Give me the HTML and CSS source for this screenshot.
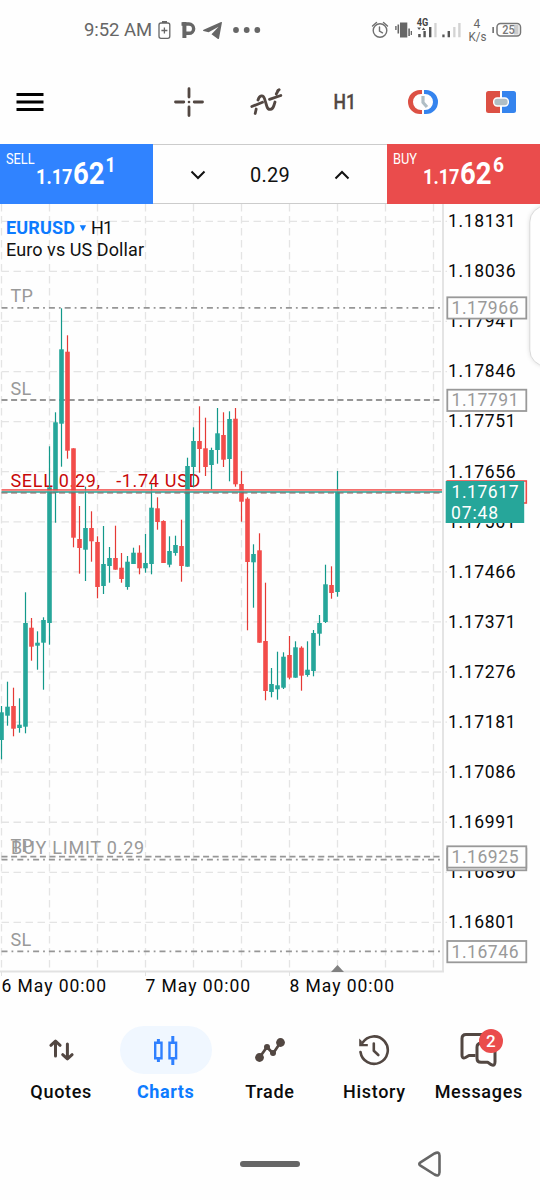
FILE: index.html
```html
<!DOCTYPE html>
<html lang="en">
<head>
<meta charset="utf-8">
<title>EURUSD H1</title>
<link rel="stylesheet" href="styles.css">
</head>
<body>
<div class="screen">
  <header class="status">
    <div class="status-left">
      <span class="clock">9:52 AM</span>
      <svg class="status-icons-left" viewBox="156 18 108 24" width="108" height="24">
        <g fill="none" stroke="#666" stroke-width="1.3"><rect x="159" y="23" width="10.8" height="15.3" rx="2"/><path d="M164.4 27.5v6M161.4 30.5h6"/></g>
        <path fill="#666" d="M162 21h5v2h-5z"/>
        <path fill="none" stroke="#666" stroke-width="4" d="M184.4 22v16"/>
        <path fill="none" stroke="#666" stroke-width="3.4" d="M181.5 24h3M185 24h4a4 4 0 0 1 0 9.3h-4"/>
        <path fill="#666" d="M222 22.200L219 38.400Q218.600 39.300 217.600 38.700L211.500 34.200L218.600 26.700L208.600 32.300L203.400 31Q202.400 30.300 203.600 29.700L220.500 22.200Q221.600 21.800 222 22.200Z"/>
        <g fill="#666"><circle cx="236" cy="30" r="2.9"/><circle cx="246.700" cy="30" r="2.900"/><circle cx="257.300" cy="30" r="2.900"/></g>
      </svg>
    </div>
    <svg class="status-right" viewBox="370 16 154 28" width="154" height="28">
      <g fill="none" stroke="#707070" stroke-width="1.400" stroke-linecap="round">
        <circle cx="380" cy="30.500" r="6.800"/><path d="M379.500 27v4l3 1.800M372.500 26l4-3.600M387.500 26l-4-3.600"/>
      </g>
      <path fill="#666" d="M400 22.500h7.300v15H400zM397.500 24.500h1.600v9h-1.600zM395.200 26h1.400v4h-1.400zM408.300 28.500h1.600v7.500h-1.600zM410.700 31h1.300v4h-1.300z"/>
      <text class="net" x="416.800" y="26.200" textLength="11.500" lengthAdjust="spacingAndGlyphs">4G</text>
      <path fill="#555" d="M417.200 27.500h3.800l-1.900 2.400zM421.700 29.900h3.700l-1.900-2.400zM418.200 34h2.500v3.300h-2.500zM423.400 31h2.400v6.300h-2.400zM429 27h2.400v10.300H429zM442.300 34.500h2.300v2.800h-2.300zM447.600 31h2.400v6.300h-2.400z"/>
      <path fill="#d3d3d3" d="M434.300 23h2.300v14.300h-2.300zM453.200 27h2.300v10.300h-2.300zM458.200 23h2.400v14.300h-2.400z"/>
      <text class="rate" x="476.800" y="28.200" text-anchor="middle">4</text>
      <text class="rate" x="468.500" y="40.800" textLength="18" lengthAdjust="spacingAndGlyphs">K/s</text>
      <rect x="492.300" y="27" width="1.700" height="6" fill="#777"/>
      <rect x="497" y="23.500" width="23.500" height="12.500" rx="3.500" fill="none" stroke="#777" stroke-width="1.500"/>
      <rect x="514" y="25" width="4.500" height="9.500" fill="#ccc"/>
      <text class="battery" x="502.300" y="34.200" textLength="12.500" lengthAdjust="spacingAndGlyphs">25</text>
    </svg>
  </header>

  <div class="toolbar">
    <svg class="menu" viewBox="0 0 28 20" width="28" height="20"><path d="M.5 2.500h27M.5 10h27M.5 17.500h27" stroke="#000" stroke-width="3"/></svg>
    <div class="tools">
      <svg viewBox="174 87 30 30" width="30" height="30"><path d="M189 88.700v8.300M189 107v8.500M175.500 102h8.300M194.200 102h8.300" stroke="#524742" stroke-width="2.800" stroke-linecap="round"/><circle cx="189" cy="102" r="1.300" fill="#524742"/></svg>
      <svg viewBox="249 86 36 32" width="36" height="32"><g fill="none" stroke="#524742" stroke-width="2.800" stroke-linecap="round" stroke-linejoin="round"><path d="M255.200 113.500l1-4.500M258 100c1.500-5 5.300-5.500 6.500-1.300l2.400 7.800c1.300 4 5.500 4 7-1l1.100-3.500M278 90.500l1.200-.8"/><path d="M251.800 106.500l10.700-4.200M269.500 99.300l11.300-3.800M277.900 91l-1.600 3"/></g></svg>
      <svg viewBox="0 0 26 26" width="26" height="26"><text class="h1" x="1.500" y="20.300" textLength="22.500" lengthAdjust="spacingAndGlyphs">H1</text></svg>
      <svg viewBox="407 88 32 28" width="32" height="28">
        <path fill="#dc5044" d="M422 90h-2a12 12 0 0 0 0 24h2v-4h-1a8 8 0 0 1 0-16h1z"/>
        <path fill="#3584ee" d="M424 90h2a12 12 0 0 1 0 24h-2v-4h1a8 8 0 0 0 0-16h-1z"/>
        <path fill="none" stroke="#b0bec5" stroke-width="3.200" d="M423 96v6.500l4 4.500"/>
      </svg>
      <svg viewBox="485 90 32 24" width="32" height="24">
        <path fill="#dc5044" d="M488.500 91H500v22h-11.500a2.500 2.500 0 0 1-2.500-2.500v-17a2.500 2.500 0 0 1 2.500-2.500z"/>
        <path fill="#3584ee" d="M502 91h11.500a2.500 2.500 0 0 1 2.500 2.500v17a2.500 2.500 0 0 1-2.500 2.500H502z"/>
        <rect x="493.700" y="98" width="14.600" height="8" rx="3.500" fill="#b0bec5" stroke="#fff" stroke-width="1.400"/>
      </svg>
    </div>
  </div>

  <div class="trade">
    <svg class="sell" viewBox="0 144 153 60" width="153" height="60">
      <text class="side" x="6" y="164" textLength="28.500" lengthAdjust="spacingAndGlyphs">SELL</text>
      <text class="quote" x="36" y="184.300" textLength="36.500" lengthAdjust="spacingAndGlyphs">1.17</text>
      <text class="pips" x="73" y="184.300" textLength="31.500" lengthAdjust="spacingAndGlyphs">62</text>
      <text class="quote" x="105.500" y="172" textLength="10" lengthAdjust="spacingAndGlyphs">1</text>
    </svg>
    <div class="volume">
      <svg viewBox="0 0 16 10" width="16" height="10"><path d="M1.500 1.500L8 8l6.500-6.500"/></svg>
      <span>0.29</span>
      <svg viewBox="0 0 16 10" width="16" height="10"><path d="M1.500 8.500L8 2l6.500 6.500"/></svg>
    </div>
    <svg class="buy" viewBox="387 144 153 60" width="153" height="60">
      <text class="side" x="393" y="164" textLength="24" lengthAdjust="spacingAndGlyphs">BUY</text>
      <text class="quote" x="423" y="184.300" textLength="36.500" lengthAdjust="spacingAndGlyphs">1.17</text>
      <text class="pips" x="460" y="184.300" textLength="31.500" lengthAdjust="spacingAndGlyphs">62</text>
      <text class="quote" x="493" y="172" textLength="11" lengthAdjust="spacingAndGlyphs">6</text>
    </svg>
  </div>

  <svg class="chart" viewBox="0 204 540 806" width="540" height="806">
    <g id="grid" class="grid"></g>
    <path d="M443 204v767.800M0 971.500h444" fill="none" stroke="#e2e2e2" stroke-width="1.800"/>
    <path d="M145.500 972v4M289.500 972v4M1.500 972v4" stroke="#e2e2e2"/>
    <g class="order">
      <text x="10.500" y="302.300">TP</text>
      <text x="10.500" y="394.900">SL</text>
      <text x="11" y="854.300" textLength="133.500">BUY LIMIT 0.29</text>
      <text x="10.500" y="851.600">TP</text>
      <text x="10.500" y="946">SL</text>
      <path class="dashdot" d="M1.500 307.800H442M1.500 859.700H442M1.500 951.300H442"/>
      <path class="dash" d="M1.500 400H442M1.500 856.700H442"/>
    </g>
    <text class="position" x="10.500" y="486.700" textLength="189.800" xml:space="preserve">SELL 0.29,   -1.74 USD</text>
    <g id="candles"></g>
    <path d="M1.500 491H442" stroke="#fbb9b5" stroke-width="1.600"/>
    <path d="M1.500 489.900H442" stroke="#ef3f3c" stroke-width="1.200"/>
    <path d="M1.500 492H442" stroke="#26a69a" stroke-width="1.500"/>
    <path d="M1.500 493H442" stroke="#8e5a58" stroke-width="1" stroke-dasharray="6 3.600"/>
    <path d="M331 972l6.500-7 6.500 7z" fill="#808080"/>

    <text class="symbol" x="6" y="234" textLength="69">EURUSD</text>
    <path d="M79.700 225.300h6.400l-3.200 6z" fill="#0d7bff"/>
    <text class="caption" x="91" y="234" textLength="22">H1</text>
    <text class="caption" x="6" y="255.500" textLength="138">Euro vs US Dollar</text>

    <g id="scale" class="scale"></g>
    <g class="tag">
      <rect x="447.300" y="297.300" width="79" height="21.300"/><text x="451.500" y="313.800" textLength="67">1.17966</text>
      <rect x="447.300" y="389.700" width="79" height="21.300"/><text x="451.500" y="406.100" textLength="67">1.17791</text>
      <rect x="447.300" y="848.700" width="79" height="21.600"/><rect x="447.300" y="846.300" width="79" height="21.300"/><text x="451.500" y="863" textLength="67">1.16925</text>
      <rect x="447.300" y="941" width="79" height="21.300"/><text x="451.500" y="957.600" textLength="67">1.16746</text>
    </g>
    <rect x="447.300" y="481" width="79" height="22" fill="#fff" stroke="#f04a48" stroke-width="1.600"/>
    <path fill="#26a69a" d="M445.700 481h78.500v42h-78.500z"/>
    <g class="live"><text x="451.500" y="497.800" textLength="67">1.17617</text><text x="451" y="518.500" textLength="47">07:48</text></g>
    <rect class="handle" x="529.800" y="206" width="40" height="160" rx="16"/>
    <g class="scale"><text x="1.500" y="991.700" textLength="104.500">6 May 00:00</text><text x="145.500" y="991.700" textLength="104.500">7 May 00:00</text><text x="289.500" y="991.700" textLength="104.500">8 May 00:00</text></g>
  </svg>

  <nav class="tabs">
    <a class="tab"><span class="pill"><svg viewBox="46 1034 30 32" width="30" height="32"><path d="M55.500 1056v-14.500M50.900 1045.300l4.600-4.300 4.600 4.300M67.400 1044v14.500M62.700 1054.700l4.700 4.300 4.700-4.300" fill="none" stroke="#524742" stroke-width="3" stroke-linecap="round" stroke-linejoin="round"/></svg></span><span class="label">Quotes</span></a>
    <a class="tab active"><span class="pill"><svg viewBox="151 1034 30 32" width="30" height="32"><g fill="none" stroke="#2f80ff"><path stroke-width="2.400" d="M155.200 1042.700h6.300v15.600h-6.300zM169.500 1042.700h6.600v15.600h-6.600z"/><path stroke-width="3" d="M158.400 1039v4M158.400 1058v4M172.800 1036v7M172.800 1058v7"/></g></svg></span><span class="label">Charts</span></a>
    <a class="tab"><span class="pill"><svg viewBox="254 1034 32 32" width="32" height="32"><path d="M259.500 1057.500l7.500-10.500 6 6.500 7.500-11" fill="none" stroke="#524742" stroke-width="2.700"/><g fill="#524742"><circle cx="259.500" cy="1057.500" r="4.400"/><circle cx="280.500" cy="1042.500" r="4.400"/><circle cx="267" cy="1047" r="3"/><circle cx="273" cy="1053" r="3"/></g></svg></span><span class="label">Trade</span></a>
    <a class="tab"><span class="pill"><svg viewBox="357 1034 34 32" width="34" height="32"><g fill="none" stroke="#524742" stroke-width="2.600" stroke-linecap="round" stroke-linejoin="round"><path d="M362.500 1042.800a13.700 13.700 0 1 1-2 9.200"/><path d="M373.800 1043.500v7.300l4.500 4.200"/></g><path fill="#524742" d="M359.200 1038.500l2.600 2.600v2.800h6v2.300h-8.600z"/></svg></span><span class="label">History</span></a>
    <a class="tab"><span class="pill"><svg viewBox="456 1029 46 42" width="46" height="42"><g fill="none" stroke="#524742" stroke-width="3" stroke-linejoin="round"><path d="M475.500 1055.500h-6.500l-3.500 2c-2.500 1.200-3.600 0-3.500-2.500v-16.500q0-4 4-4h21"/><path d="M477 1058.200v-11q0-4 4-4h14v18.500c0 3-1 4.200-3.800 3l-3.500-2.500h-6.700q-4 0-4-4z"/></g></svg><b class="badge">2</b></span><span class="label">Messages</span></a>
  </nav>

  <footer class="system">
    <span class="home"></span>
    <svg viewBox="0 0 26 28" width="26" height="28"><path d="M3.500 12.300L17.500 3.500q4.800-2.400 5 2v16.800q-.2 4.800-5 2.200L3.500 15.700q-2.500-1.700 0-3.400z" fill="none" stroke="#666" stroke-width="2.600"/></svg>
  </footer>
</div>
<script src="chart.js"></script>
</body>
</html>
```
FILE: styles.css
```css
* { box-sizing: border-box; }
body { margin: 0; background: #fefefe; font-family: Roboto, "Liberation Sans", sans-serif; }
svg { display: block; flex: none; }
.screen { width: 540px; height: 1200px; display: flex; flex-direction: column; overflow: hidden; }

.status { height: 60px; padding: 0 16px 0 84px; display: flex; align-items: center; justify-content: space-between; color: #666; }
.status-left { display: flex; align-items: center; gap: 4px; }
.clock { width: 68px; font-size: 18.500px; letter-spacing: -0.050px; white-space: nowrap; }
.net { font-size: 10.500px; font-weight: 700; fill: #444; }
.rate { font-size: 12px; fill: #666; }
.battery { font-size: 12.500px; font-weight: 500; fill: #777; }

.toolbar { height: 84px; padding-left: 16px; display: flex; align-items: center; justify-content: space-between; }
.tools { width: 390px; display: grid; grid-template-columns: repeat(5, 78px); align-items: center; justify-items: center; }
.h1 { font-size: 20.500px; font-weight: 500; fill: #524742; stroke: #524742; stroke-width: 0.300px; }

.trade { height: 60px; display: flex; }
.sell { background: #3083ff; }
.buy { background: #ea4c4c; }
.side { font-size: 15px; fill: #fff; }
.quote { font-size: 20px; font-weight: 700; fill: #fff; }
.pips { font-size: 31px; font-weight: 700; fill: #fff; }
.volume { flex: 1; display: flex; align-items: center; justify-content: space-between; padding: 1px 37px 0; border-top: 1px solid #ccc; border-bottom: 1.500px solid #ccc; font-size: 20px; color: #111; letter-spacing: 0.300px; }
.volume path { fill: none; stroke: #111; stroke-width: 2px; }

.chart { font-size: 17.500px; }
.grid { fill: none; stroke: #e4e4e4; stroke-width: 1.300px; stroke-dasharray: 7.500 4.500; }
.order { font-size: 18px; fill: #999; letter-spacing: 0.300px; }
.order path { fill: none; stroke: #969696; stroke-width: 1.800px; }
.order .dashdot { stroke-dasharray: 6 4 1.800 4; }
.order .dash { stroke-dasharray: 6 3.600; }
.position { font-size: 18px; fill: #c80808; }
.symbol { font-size: 18px; font-weight: 700; fill: #0d7bff; }
.caption { font-size: 18px; fill: #111; }
.scale { fill: #080808; }
.tag { fill: #999; }
.tag rect { fill: #fefefe; stroke: #999; stroke-width: 1.800px; }
.live { fill: #fff; }
.handle { fill: #fefefe; stroke: #d9d9d9; stroke-width: 1px; filter: drop-shadow(0 0 2px rgba(0, 0, 0, 0.120)); }
.up { fill: #26a69a; }
.up .wick { fill: #12988a; }
.down { fill: #f24c4a; }
.down .wick { fill: #e53935; }

.tabs { height: 110px; padding: 16px 9px 0; display: flex; }
.tab { flex: 1; display: flex; flex-direction: column; align-items: center; gap: 7px; color: #0b0b0b; }
.pill { position: relative; width: 92px; height: 48px; border-radius: 24px; display: flex; align-items: center; justify-content: center; }
.active .pill { background: #f0f7ff; }
.label { font-size: 18px; line-height: 22px; font-weight: 500; letter-spacing: 0.700px; white-space: nowrap; }
.active .label { color: #0d7bff; font-weight: 700; letter-spacing: 0.600px; }
.badge { position: absolute; left: 46px; top: 3px; width: 24px; height: 24px; border-radius: 50%; background: #ea4c4c; color: #fff; font-size: 17px; font-weight: 500; line-height: 24px; text-align: center; }

.system { height: 80px; padding: 8px 97px 0 240px; display: flex; align-items: center; justify-content: space-between; }
.home { width: 60px; height: 6px; border-radius: 3px; background: #666; }
```
FILE: chart.js
```js
// Each candle: direction, high, body top, body bottom, low (chart y units).
const candles = [
  [1,706,712.3,740,759.3],[1,681.7,706.7,715.7,725.7],[0,687.7,706,728.7,736.3],[1,698.3,724.7,728,732.7],
  [1,592.3,623,726.7,733.3],[0,618,627.7,646.7,660.7],[1,631.3,642.7,645.7,669.7],[1,617.3,620,642.7,689.7],
  [1,446.3,487.3,623,644.7],[1,412.3,422.3,492.7,522.7],[1,308.3,349.3,423.7,466.7],[0,335.3,351.7,450.7,458.7],
  [0,448.3,448.3,537.7,547.3],[0,506,539,548,573.7],[1,486.7,528,549.7,581],[0,511.3,528,541.3,561.7],
  [0,536.3,542,587,598.3],[1,526,564,586,594],[1,547,558,566,582.7],[0,525.7,558,569.7,569.7],
  [0,553,567.7,579,582.7],[1,556,561.7,587,589.7],[1,547.7,552.7,564,564],[0,545.3,552.7,568.3,574.3],
  [1,534,563,568.3,572.7],[1,484,507.7,564,574.3],[0,497.3,508.3,522,529.7],[0,520.3,521,563,563],
  [1,536.3,551,564.7,567.3],[1,535.7,545,553,555.7],[0,519.7,546,566,581.7],[1,457.7,466,566.7,566.7],
  [1,427.3,441,467,487.3],[0,406.3,441,449,472.7],[0,417.7,448.3,467,476],[1,447.7,450,465,489.3],
  [1,408,433.3,450,463.7],[0,412.3,435,459.7,467],[1,411.3,419,459,481.3],[0,408,418.7,484.3,486.7],
  [0,471,484,501.7,521.7],[0,497.3,498.7,562,630.3],[1,544.3,554,562.3,607.7],[0,533.3,550.3,642.7,642.7],
  [0,582.7,641,691,700.3],[1,668,684,692,697.3],[1,651.7,685.3,689.3,699.7],[1,652.3,656.7,687.7,689],
  [0,636,655,677.7,679.3],[1,641.3,647.3,677.7,677.7],[0,646.3,647.7,675.7,690.7],[1,641.3,669.7,675,676.7],
  [1,630,633,671,676.3],[1,615,623,633.7,645.7],[1,564.7,584.3,622,623],[0,566.3,585,593,598.7],
  [1,471,491.7,592,596.7]
];
document.getElementById("candles").innerHTML = candles.map(([up, high, top, bottom, low], i) => {
  const x = 1.5 + i * 6;
  return `<g class="${up ? "up" : "down"}"><rect class="wick" x="${x - 0.6}" y="${high}" width="1.2" height="${low - high}"/><rect x="${x - 2.3}" y="${top}" width="4.6" height="${bottom - top}"/></g>`;
}).join("");

let lines = "";
let labels = "";
for (let x = 1.5; x < 440; x += 48) lines += `<path d="M${x} 204V968"/>`;
for (let i = 0; i < 15; i++) {
  const y = 221.3 + i * 50.08;
  lines += `<path d="M1.5 ${y}H447"/>`;
  const price = (1.18131 - i * 0.00095).toFixed(5);
  labels += `<text x="448" y="${y + 5.8}" textLength="67.5">${price}</text>`;
}
document.getElementById("grid").innerHTML = lines;
document.getElementById("scale").innerHTML = labels;
```
